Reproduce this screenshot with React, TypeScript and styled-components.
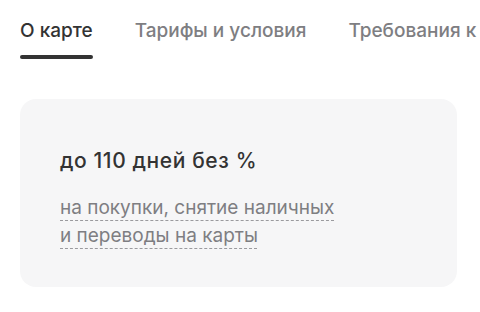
import React from "react";
import styled, { createGlobalStyle } from "styled-components";

const Global = createGlobalStyle`
  html, body { margin: 0; padding: 0; background: #ffffff; }
  body { font-family: Inter, "Noto Sans", Roboto, sans-serif; -webkit-font-smoothing: antialiased; }
`;

const Page = styled.div`
  width: 480px;
  height: 312px;
  overflow: hidden;
  box-sizing: border-box;
  padding: 19px 0 0 20px;
`;

const Tabs = styled.nav`
  display: flex;
  gap: 42px;
  white-space: nowrap;
`;

const Tab = styled.div<{ $active?: boolean }>`
  display: flex;
  flex-direction: column;
  gap: 12px;
  font-size: 19px;
  font-weight: 500;
  line-height: 24px;
  color: ${(p) => (p.$active ? "#333333" : "#7e7e82")};
  &::after {
    content: "";
    display: block;
    height: 4px;
    border-radius: 2px;
    background: ${(p) => (p.$active ? "#333333" : "transparent")};
  }
`;

const Card = styled.section`
  margin-top: 40px;
  width: 437px;
  height: 188px;
  box-sizing: border-box;
  border-radius: 16px;
  background: #f6f6f7;
  padding: 48px 40px 0 40px;
`;

const Title = styled.h2`
  margin: 0;
  font-size: 21px;
  font-weight: 500;
  line-height: 28px;
  color: #333333;
  letter-spacing: 0.6px;
`;

const Sub = styled.p`
  margin: 19px 0 0;
  font-size: 19px;
  line-height: 28px;
  color: #7e7e82;
  width: 285px;
`;

const Hint = styled.span`
  text-decoration: underline dashed #9a9a9e;
  text-decoration-thickness: 1px;
  text-underline-offset: 6px;
`;

export default function App() {
  return (
    <Page>
      <Global />
      <Tabs>
        <Tab $active>О карте</Tab>
        <Tab>Тарифы и условия</Tab>
        <Tab>Требования к</Tab>
      </Tabs>
      <Card>
        <Title>до 110 дней без %</Title>
        <Sub>
          <Hint>на покупки, снятие наличных и переводы на карты</Hint>
        </Sub>
      </Card>
    </Page>
  );
}
